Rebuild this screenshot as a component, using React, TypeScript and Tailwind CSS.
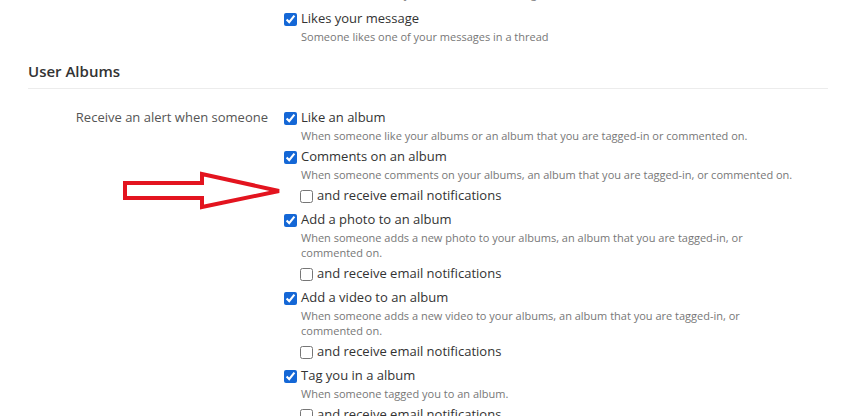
import React from "react";

type Item = { label: string; desc: string[]; email?: boolean };

const items: Item[] = [
  { label: "Like an album", desc: ["When someone like your albums or an album that you are tagged-in or commented on."] },
  { label: "Comments on an album", desc: ["When someone comments on your albums, an album that you are tagged-in, or commented on."], email: true },
  { label: "Add a photo to an album", desc: ["When someone adds a new photo to your albums, an album that you are tagged-in, or", "commented on."], email: true },
  { label: "Add a video to an album", desc: ["When someone adds a new video to your albums, an album that you are tagged-in, or", "commented on."], email: true },
  { label: "Tag you in a album", desc: ["When someone tagged you to an album."], email: true },
];

function Box({ checked }: { checked: boolean }) {
  return (
    <input
      type="checkbox"
      defaultChecked={checked}
      className="m-0 h-[13px] w-[13px] shrink-0 accent-[#1467d6]"
    />
  );
}

function Option({ item, checked = true, last = false }: { item: Item; checked?: boolean; last?: boolean }) {
  return (
    <div className={last ? "mb-[8px]" : "mb-[4px]"}>
      <label className="flex h-[20px] items-center gap-[4px] text-[13px] text-[#333]">
        <Box checked={checked} />
        <span>{item.label}</span>
      </label>
      <div className="pl-[17px] text-[11px] leading-[15px] text-[#777]">
        {item.desc.map((d) => (
          <div key={d}>{d}</div>
        ))}
      </div>
      {item.email && (
        <label className="mt-[4px] flex h-[20px] items-center gap-[4px] pl-[16px] text-[13px] text-[#333]">
          <Box checked={false} />
          <span>and receive email notifications</span>
        </label>
      )}
    </div>
  );
}

export default function App() {
  return (
    <div
      className="relative h-[416px] w-[843px] overflow-hidden bg-white"
      style={{ fontFamily: '"Open Sans", "Noto Sans", sans-serif' }}
    >
      <div className="mt-[-34px] pl-[28px] pr-[15px]">
        <div className="flex">
          <div className="w-[256px] shrink-0" />
          <div>
            <Option last item={{ label: "Mentions you in a message", desc: ["Someone mentions you in a thread or message"] }} />
            <Option item={{ label: "Likes your message", desc: ["Someone likes one of your messages in a thread"] }} />
          </div>
        </div>

        <div className="mt-[11px] border-b border-[#ececec] pb-[5px]">
          <h2 className="text-[15px] font-semibold leading-[24px] text-[#333]">User Albums</h2>
        </div>

        <div className="flex pt-[19px]">
          <div className="flex h-[20px] w-[256px] shrink-0 items-center justify-end pr-[16px] text-[13px] text-[#555]">
            Receive an alert when someone
          </div>
          <div>
            {items.map((it) => (
              <Option key={it.label} item={it} />
            ))}
          </div>
        </div>
      </div>

      <svg className="pointer-events-none absolute left-0 top-0" width="843" height="416">
        <polygon
          points="125,183 202,183 202,174 279,191 202,207 202,198 125,198"
          fill="none"
          stroke="#e3141f"
          strokeWidth="4"
          strokeLinejoin="miter"
        />
      </svg>
    </div>
  );
}
